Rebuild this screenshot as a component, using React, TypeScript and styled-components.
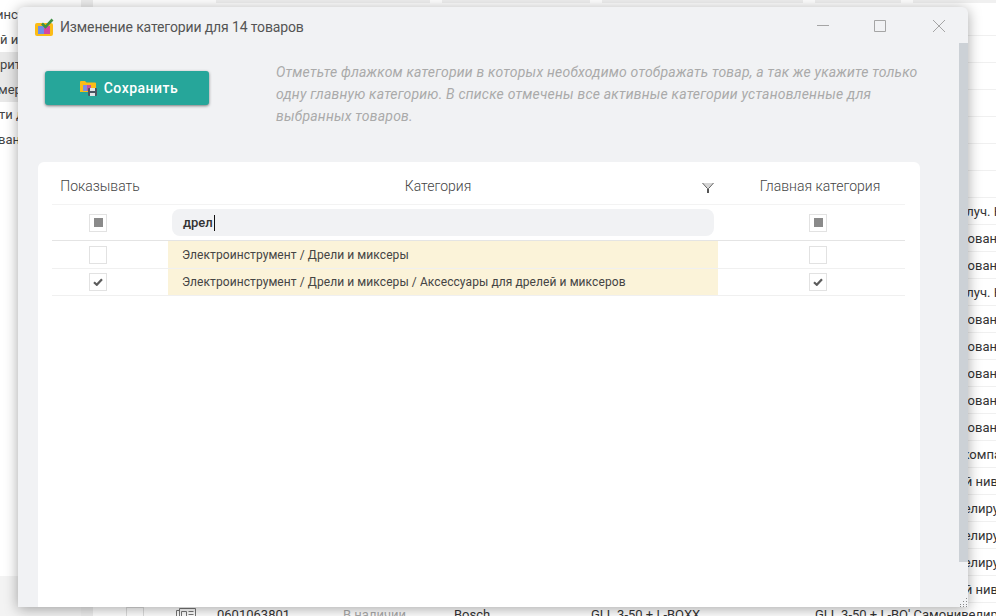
import React from 'react'
import styled, { createGlobalStyle } from 'styled-components'

const GlobalStyle = createGlobalStyle`
  html, body {
    margin: 0;
    padding: 0;
    height: 100%;
    overflow: hidden;
    background: #fff;
    font-family: Roboto, "Liberation Sans", sans-serif;
  }
  * { box-sizing: border-box; }
`

// indent: the sidebar is scrolled a little, its words start left of the window
const sideItems = [
  { text: 'инструмент', active: false, indent: -4 },
  { text: 'й инструмент', active: false, indent: 0 },
  { text: 'рительный', active: true, indent: 0 },
  { text: 'мерительный', active: true, indent: -2 },
  { text: 'ти для', active: false, indent: -1 },
  { text: 'вание', active: false, indent: -2 },
]

// inset: how far the clipped tail of the text ends before the right edge of the table
const descriptions = [
  { text: '', inset: 0 },
  { text: '', inset: 0 },
  { text: '', inset: 0 },
  { text: '', inset: 0 },
  { text: '', inset: 0 },
  { text: '', inset: 0 },
  { text: '', inset: 0 },
  { text: 'Лазерный 3 луч. К', inset: 0 },
  { text: 'Самонивелирован', inset: 5 },
  { text: 'Самонивелирован', inset: 5 },
  { text: 'Лазерный 2 луч. К', inset: 0 },
  { text: 'Самонивелирован', inset: 5 },
  { text: 'Самонивелирован', inset: 5 },
  { text: 'Самонивелирован', inset: 5 },
  { text: 'Самонивелирован', inset: 5 },
  { text: 'Самонивелирован', inset: 5 },
  { text: 'Лазерная компа', inset: 1 },
  { text: 'Лазерный нив', inset: 4 },
  { text: 'Самонивелиру', inset: 3 },
  { text: 'Самонивелиру', inset: 3 },
  { text: 'Самонивелиру', inset: 3 },
  { text: 'Лазерный нив', inset: 4 },
]

const App: React.FC = () => {
  return (
    <Page>
      <GlobalStyle />
      <Sidebar>
        <SideList>
          {sideItems.map(item => (
            <SideItem key={item.text} $active={item.active} $indent={item.indent}>{item.text}</SideItem>
          ))}
        </SideList>
        <SideFooter />
      </Sidebar>
      <Gutter />
      <Main>
        <TopTabs>
          <TopTab $width={214} />
          <TopTab $width={148} />
          <TopTab $width={201} />
          <TopTab $width={86} />
          <TopTab $width={85} />
        </TopTabs>
        {descriptions.map((row, i) => (
          <BackRow key={i}><BackDesc $inset={row.inset}>{row.text}</BackDesc></BackRow>
        ))}
        <ProductRow>
          <span />
          <BackCheck />
          <svg width="20" height="16" viewBox="0 0 20 16">
            <path d="M3.5 1.5H19.5V15H3.5zM.5 3.5H3.5M.5 3.5V15M5.5 4.5H10.5V11H5.5zM12.5 4.5H17.5M12.5 7.5H17.5M12.5 10.5H17.5" stroke="#777" fill="none" />
          </svg>
          <span>0601063801</span>
          <MutedCell>В наличии</MutedCell>
          <span>Bosch</span>
          <span>GLL 3-50 + L-BOXX</span>
          <span>GLL 3-50 + L-BO' Самонивелирующийся</span>
        </ProductRow>
      </Main>

      <Modal>
        <TitleBar>
          <AppIcon />
          <Title>Изменение категории для 14 товаров</Title>
          <WindowButtons>
            <svg width="12" height="12" viewBox="0 0 12 12"><path d="M0 5.5h12" stroke="#a5a5a5" fill="none" /></svg>
            <svg width="12" height="12" viewBox="0 0 12 12"><path d="M.5.5h11v11H.5z" stroke="#a5a5a5" fill="none" /></svg>
            <svg width="12" height="12" viewBox="0 0 12 12"><path d="M0 0l12 12M12 0L0 12" stroke="#a5a5a5" fill="none" /></svg>
          </WindowButtons>
        </TitleBar>
        <Intro>
          <SaveButton>
            <SaveIcon />
            Сохранить
          </SaveButton>
          <Hint>
            Отметьте флажком категории в которых необходимо отображать товар, а так же укажите только
            одну главную категорию. В списке отмечены все активные категории установленные для
            выбранных товаров.
          </Hint>
        </Intro>
        <Card>
          <HeaderRow>
            <HeadCell>Показывать</HeadCell>
            <CategoryHead>
              Категория
              <FilterIcon width="12" height="10" viewBox="0 0 12 10">
                <path d="M1 0H11L6 5z" fill="#d5d5d5" />
                <path d="M.5 0L5.5 5.5V10M11.5 0L6.5 5.5V10" stroke="#555" fill="none" />
              </FilterIcon>
            </CategoryHead>
            <MainHead>Главная категория</MainHead>
          </HeaderRow>
          <FilterRow>
            <ShowCell><Check $state="mixed" /></ShowCell>
            <InputCell>
              <SearchBox>дрел<Caret /></SearchBox>
            </InputCell>
            <MainCell><Check $state="mixed" /></MainCell>
          </FilterRow>
          <DataRow $height={28}>
            <ShowCell><Check $state="off" /></ShowCell>
            <NameCell>Электроинструмент / Дрели и миксеры</NameCell>
            <MainCell><Check $state="off" /></MainCell>
          </DataRow>
          <DataRow $height={27}>
            <ShowCell><Check $state="on"><CheckMark /></Check></ShowCell>
            <NameCell>Электроинструмент / Дрели и миксеры / Аксессуары для дрелей и миксеров</NameCell>
            <MainCell><Check $state="on"><CheckMark /></Check></MainCell>
          </DataRow>
        </Card>
        <ScrollThumb />
        <ResizeGrip width="9" height="9" viewBox="0 0 9 9">
          <path d="M7 0h1v1H7zM4 3h1v1H4zM7 3h1v1H7zM1 6h1v1H1zM4 6h1v1H4zM7 6h1v1H7zM1 8h1v1H1zM4 8h1v1H4zM7 8h1v1H7z" fill="#888" />
        </ResizeGrip>
      </Modal>
    </Page>
  )
}

export default App

const AppIcon: React.FC = () => (
  <svg width="20" height="19" viewBox="0 0 20 19">
    <rect x="0" y="5" width="18" height="13" rx="2" fill="#fbbc16" />
    <rect x="3" y="8" width="6" height="8" fill="#6f8fe8" />
    <rect x="9" y="8" width="6" height="8" fill="#d6479f" />
    <path d="M7 5.5l3.5 3.5L17.5 1.5" stroke="#3f9143" strokeWidth="2.6" fill="none" />
  </svg>
)

const SaveIcon: React.FC = () => (
  <svg width="17" height="16" viewBox="0 0 17 16">
    <path d="M0 2a1 1 0 0 1 1-1h4l1.5 1.5H15a1 1 0 0 1 1 1V12H0z" fill="#fbbc16" />
    <rect x="3" y="5" width="4" height="6" fill="#7d8fe0" />
    <rect x="7" y="5" width="4" height="6" fill="#c9509f" />
    <rect x="8" y="8" width="9" height="8" rx="1" fill="#4a5560" />
    <rect x="10" y="8" width="5" height="3" fill="#dfe3e6" />
    <rect x="10" y="13" width="5" height="3" fill="#dfe3e6" />
  </svg>
)

const CheckMark: React.FC = () => (
  <svg width="10" height="8" viewBox="0 0 10 8">
    <path d="M1 4.2L3.8 6.8L9 1.2" stroke="#5c5c5c" strokeWidth="2.2" fill="none" />
  </svg>
)

const Page = styled.div`
  position: relative;
  width: 996px;
  height: 616px;
  overflow: hidden;
  display: flex;
  color: #333;
  font-size: 13px;
`

const Sidebar = styled.aside`
  width: 81px;
  height: 100%;
  flex-shrink: 0;
  display: flex;
  flex-direction: column;
  justify-content: space-between;
`

const SideList = styled.div`
  padding-top: 2px;
  display: flex;
  flex-direction: column;
`

const SideItem = styled.div<{ $active: boolean; $indent: number }>`
  height: 25px;
  line-height: 25px;
  font-size: 13px;
  white-space: nowrap;
  overflow: hidden;
  text-indent: ${p => p.$indent}px;
  color: #444;
  background: ${p => (p.$active ? '#e9e9e9' : '#fff')};
`

const SideFooter = styled.div`
  height: 40px;
  background: #f3f3f3;
`

const Gutter = styled.div`
  width: 12px;
  height: 100%;
  flex-shrink: 0;
  background: #eeeeee;
`

const Main = styled.main`
  width: 909px;
  flex-shrink: 0;
  display: flex;
  flex-direction: column;
`

const TopTabs = styled.div`
  height: 9px;
  flex-shrink: 0;
  display: flex;
  gap: 12px;
  padding-left: 123px;
`

const TopTab = styled.div<{ $width: number }>`
  width: ${p => p.$width}px;
  height: 3px;
  background: #f0f0f0;
`

const BackRow = styled.div`
  height: 27px;
  flex-shrink: 0;
  border-bottom: 1px solid #f0f0f0;
  display: flex;
  align-items: center;
  justify-content: flex-end;
`

const BackDesc = styled.span<{ $inset: number }>`
  margin-right: ${p => p.$inset}px;
  font-size: 13px;
  color: #333;
  white-space: nowrap;
`

const ProductRow = styled.div`
  height: 27px;
  flex-shrink: 0;
  padding-top: 4px;
  display: grid;
  grid-template-columns: 33px 50px 41px 126px 111px 137px 224px 1fr;
  align-items: start;
  line-height: 16px;
  white-space: nowrap;
`

const BackCheck = styled.div`
  width: 18px;
  height: 18px;
  border: 1px solid #ddd;
`

const MutedCell = styled.span`
  color: #aaa;
`

const Modal = styled.section`
  position: absolute;
  left: 18px;
  top: 7px;
  width: 950px;
  height: 600px;
  background: #f1f2f4;
  border-radius: 6px 6px 0 0;
  box-shadow: 0 2px 14px rgba(0, 0, 0, 0.35);
  display: flex;
  flex-direction: column;
  overflow: hidden;
`

const TitleBar = styled.header`
  height: 40px;
  padding: 0 23px 0 17px;
  display: flex;
  align-items: center;
  flex-shrink: 0;
`

const Title = styled.h1`
  margin: 0 0 0 5px;
  flex: 1;
  font-size: 14px;
  font-weight: 400;
  letter-spacing: -0.13px;
  color: #555;
`

const WindowButtons = styled.div`
  display: flex;
  gap: 45px;
  margin-bottom: 2px;
  svg:last-child { margin-left: 2px; }
`

const Intro = styled.div`
  height: 115px;
  flex-shrink: 0;
  padding: 14px 40px 0 27px;
  display: flex;
  gap: 67px;
`

const SaveButton = styled.button`
  width: 164px;
  height: 34px;
  flex-shrink: 0;
  margin-top: 10px;
  padding: 0 0 0 4px;
  border: 0;
  border-radius: 3px;
  background: #26a69a;
  box-shadow: 0 1px 3px rgba(0, 0, 0, 0.5);
  color: #fff;
  font-family: inherit;
  font-size: 14px;
  font-weight: 500;
  letter-spacing: 0.5px;
  display: flex;
  align-items: center;
  justify-content: center;
  gap: 7px;
`

const Hint = styled.p`
  margin: 0;
  font-size: 14px;
  font-style: italic;
  line-height: 22px;
  letter-spacing: 0.21px;
  color: #aaa;
`

const Card = styled.div`
  flex: 1;
  margin: 0 48px 0 20px;
  padding: 8px 15px 0 14px;
  background: #fff;
  border-radius: 6px 6px 0 0;
`

const tableGrid = `
  display: grid;
  grid-template-columns: 116px 550px 187px;
`

const HeaderRow = styled.div`
  ${tableGrid}
  height: 35px;
  padding-bottom: 2px;
  align-items: center;
  border-bottom: 1px solid #f3f3f3;
  font-size: 14px;
  font-weight: 300;
  color: #444;
`

const HeadCell = styled.div`
  padding-right: 20px;
  text-align: center;
`

const CategoryHead = styled.div`
  position: relative;
  padding-right: 10px;
  text-align: center;
`

const FilterIcon = styled.svg`
  position: absolute;
  right: 4px;
  top: 5px;
`

const MainHead = styled.div`
  padding-left: 17px;
  text-align: center;
`

const FilterRow = styled.div`
  ${tableGrid}
  height: 36px;
  align-items: center;
  border-bottom: 1px solid #e4e4e4;
`

const DataRow = styled.div<{ $height: number }>`
  ${tableGrid}
  height: ${p => p.$height}px;
  align-items: stretch;
  border-bottom: 1px solid #f0f0f0;
`

const ShowCell = styled.div`
  padding-right: 24px;
  display: flex;
  align-items: center;
  justify-content: center;
`

const MainCell = styled.div`
  padding-left: 13px;
  display: flex;
  align-items: center;
  justify-content: center;
`

const InputCell = styled.div`
  padding: 0 4px;
`

const SearchBox = styled.div`
  height: 27px;
  padding-left: 11px;
  background: #f1f2f4;
  border-radius: 8px;
  display: flex;
  align-items: center;
  font-weight: 500;
  color: #333;
`

const Caret = styled.i`
  width: 1px;
  height: 16px;
  margin-left: 1px;
  background: #111;
`

const NameCell = styled.div`
  padding-left: 14px;
  display: flex;
  align-items: center;
  font-size: 12px;
  letter-spacing: 0.08px;
  background: #fbf3d9;
  color: #444;
`

const Check = styled.div<{ $state: 'on' | 'off' | 'mixed' }>`
  width: 18px;
  height: 18px;
  border: 1px solid #e2e2e2;
  background: #fff;
  display: flex;
  align-items: center;
  justify-content: center;
  &::before {
    content: '';
    display: ${p => (p.$state === 'mixed' ? 'block' : 'none')};
    width: 9px;
    height: 9px;
    background: #8a8a8a;
  }
`

const ScrollThumb = styled.div`
  position: absolute;
  right: 0;
  top: 36px;
  width: 9px;
  height: 519px;
  background: #ccd1d6;
`

const ResizeGrip = styled.svg`
  position: absolute;
  right: 0;
  bottom: 0;
`
